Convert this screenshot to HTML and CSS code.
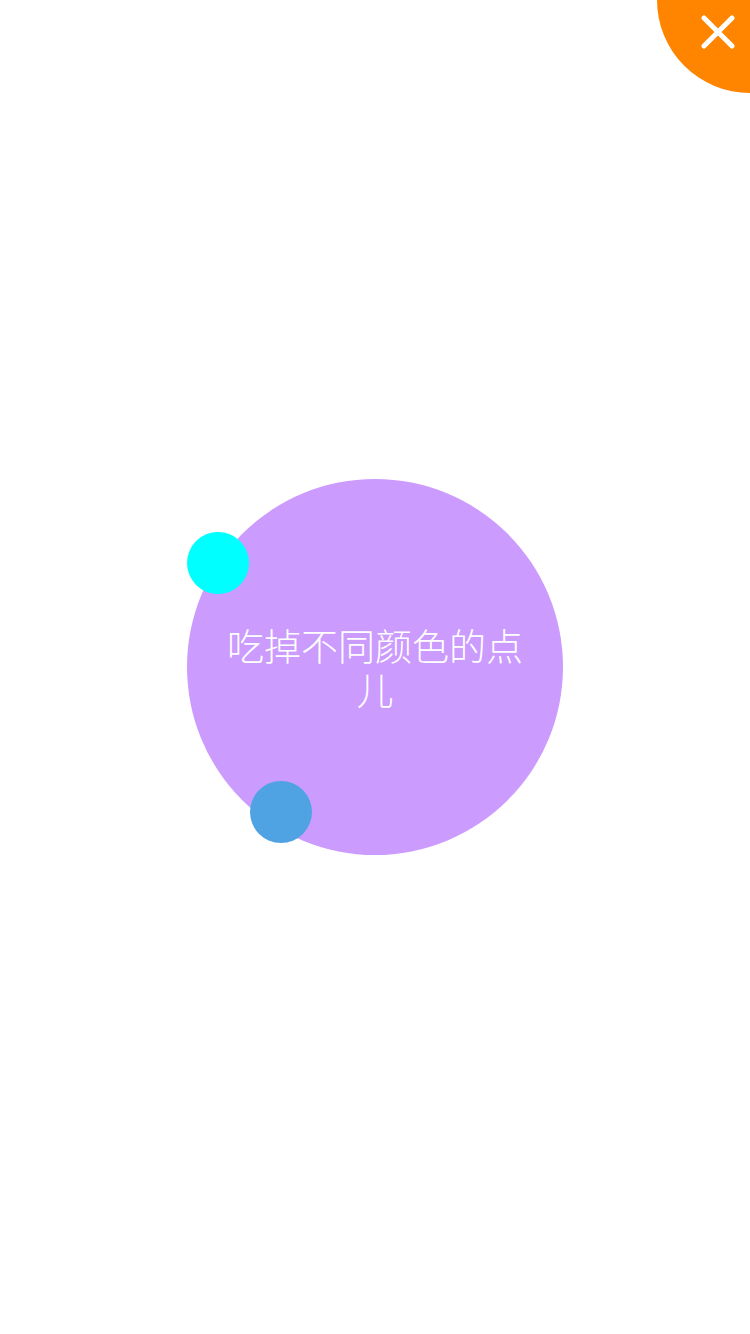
FILE: index.html
```html
<!DOCTYPE html>
<html lang="zh">
<head>
<meta charset="utf-8">
<title>吃掉不同颜色的点儿</title>
<link rel="stylesheet" href="styles.css">
</head>
<body>
<div class="page">
  <div class="board">
    <div class="ball">
      <p class="hint">吃掉不同颜色的点儿</p>
      <span class="dot dot-cyan"></span>
      <span class="dot dot-blue"></span>
    </div>
  </div>
  <button class="close" aria-label="关闭">
    <svg class="close-icon" viewBox="0 0 34 34" width="34" height="34">
      <path d="M3 3 L31 31 M31 3 L3 31" stroke="#fff" stroke-width="5" stroke-linecap="round" fill="none"/>
    </svg>
  </button>
</div>
</body>
</html>
```
FILE: styles.css
```css
html, body {
  margin: 0;
  padding: 0;
  background: #fff;
}
.page {
  position: relative;
  width: 750px;
  height: 1334px;
  overflow: hidden;
  font-family: "Noto Sans CJK SC", "Noto Sans", sans-serif;
}
.board {
  display: flex;
  align-items: center;
  justify-content: center;
  height: 100%;
}
.ball {
  position: relative;
  width: 376px;
  height: 376px;
  border-radius: 50%;
  background: #cc9bfe;
  display: flex;
  align-items: center;
  justify-content: center;
}
.hint {
  margin: 0;
  width: 310px;
  color: #fff;
  font-size: 37px;
  line-height: 44px;
  font-weight: 300;
  text-align: center;
}
.dot {
  position: absolute;
  width: 62px;
  height: 62px;
  border-radius: 50%;
}
.dot-cyan {
  left: 0;
  top: 53px;
  background: #00ffff;
}
.dot-blue {
  left: 63px;
  top: 302px;
  background: #50a3e2;
}
.close {
  position: absolute;
  top: -93px;
  right: -93px;
  width: 186px;
  height: 186px;
  border: 0;
  padding: 0;
  border-radius: 50%;
  background: #ff8400;
}
.close-icon {
  position: absolute;
  left: 44px;
  top: 108px;
}
```
